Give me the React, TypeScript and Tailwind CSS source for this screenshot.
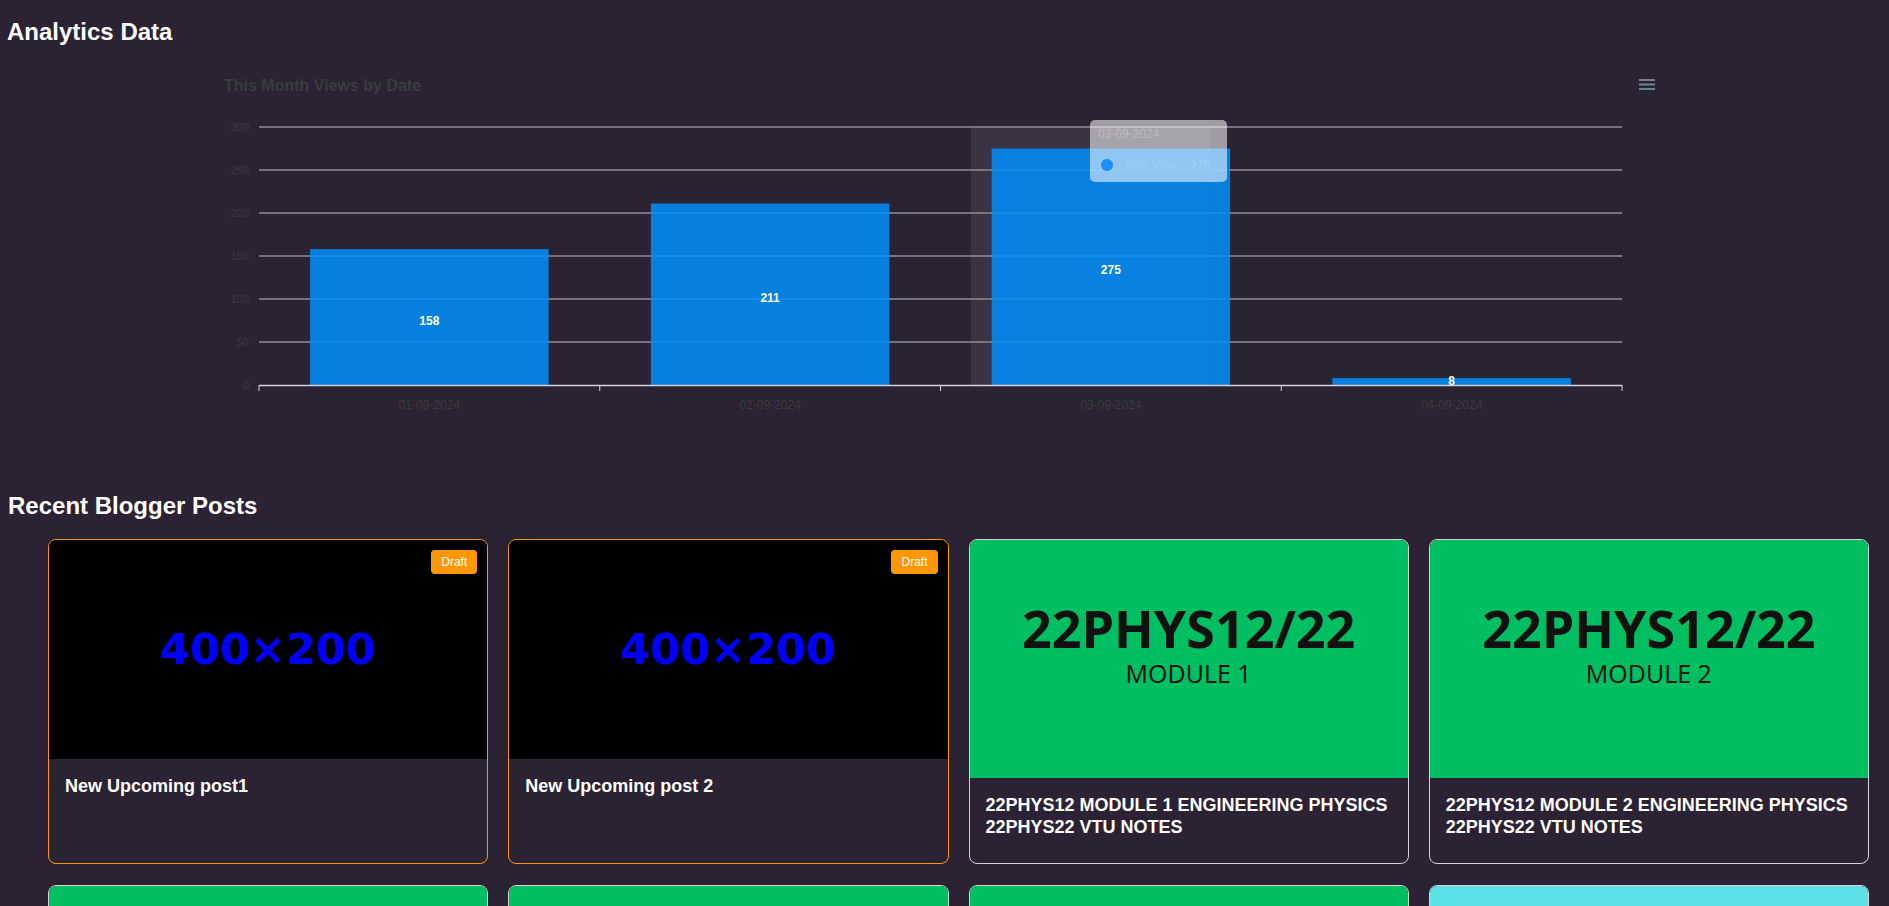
import React from 'react';

type Post = {
  title: string;
  draft?: boolean;
  kind: 'placeholder' | 'green' | 'cyan';
  module?: string;
};

const posts: Post[] = [
  { title: 'New Upcoming post1', draft: true, kind: 'placeholder' },
  { title: 'New Upcoming post 2', draft: true, kind: 'placeholder' },
  { title: '22PHYS12 MODULE 1 ENGINEERING PHYSICS 22PHYS22 VTU NOTES', kind: 'green', module: 'MODULE 1' },
  { title: '22PHYS12 MODULE 2 ENGINEERING PHYSICS 22PHYS22 VTU NOTES', kind: 'green', module: 'MODULE 2' },
  { title: '22PHYS12 MODULE 3 ENGINEERING PHYSICS 22PHYS22 VTU NOTES', kind: 'green', module: 'MODULE 3' },
  { title: '22PHYS12 MODULE 4 ENGINEERING PHYSICS 22PHYS22 VTU NOTES', kind: 'green', module: 'MODULE 4' },
  { title: '22PHYS12 MODULE 5 ENGINEERING PHYSICS 22PHYS22 VTU NOTES', kind: 'green', module: 'MODULE 5' },
  { title: 'VTU NOTES AND QUESTION PAPERS', kind: 'cyan' },
];

const views = [
  { date: '01-09-2024', value: 158 },
  { date: '02-09-2024', value: 211 },
  { date: '03-09-2024', value: 275 },
  { date: '04-09-2024', value: 8 },
];

// plot geometry (svg coords, origin at page x=200 y=48)
const PX = 59;
const PW = 1363;
const BASE = 337;
const K = 0.86;
const CAT = PW / 4;
const BAR = 238.5;

function ViewsChart() {
  const ticks = [0, 50, 100, 150, 200, 250, 300];
  return (
    <div className="relative ml-[200px] h-[442px] w-[1470px]">
      <svg width="1470" height="400" className="block font-['Liberation_Sans',Arial,sans-serif]">
        <text x="24" y="43" fontSize="16" fontWeight="700" fill="#373d3f">
          This Month Views by Date
        </text>

        {/* menu */}
        <g stroke="#6e8192" strokeWidth="2">
          <line x1="1439" y1="32" x2="1455" y2="32" />
          <line x1="1439" y1="36.5" x2="1455" y2="36.5" />
          <line x1="1439" y1="41" x2="1455" y2="41" />
        </g>

        {/* hover column */}
        <rect x="771" y="79" width="239" height={BASE - 79} fill="#ffffff" fillOpacity="0.08" />

        {ticks.map((t) => {
          const y = BASE - t * K;
          return (
            <g key={t}>
              {t > 0 && <line x1={PX} y1={y} x2={PX + PW} y2={y} stroke="#918d96" strokeWidth="1.5" />}
              <text x="49" y={y + 4} fontSize="11" fill="#373d3f" textAnchor="end">
                {t}
              </text>
            </g>
          );
        })}

        {views.map((v, i) => {
          const h = v.value * K;
          const x = PX + i * CAT + (CAT - BAR) / 2;
          return <rect key={v.date} x={x} y={BASE - h} width={BAR} height={h} fill="#008ffb" fillOpacity="0.85" />;
        })}

        {views.map((v, i) => {
          const h = v.value * K;
          const cx = PX + i * CAT + CAT / 2;
          const y = Math.min(BASE - h / 2 + 7.5, BASE);
          return (
            <text key={v.date} x={cx} y={y} fontSize="12" fontWeight="700" fill="#ffffff" textAnchor="middle">
              {v.value}
            </text>
          );
        })}

        <line x1={PX} y1={BASE + 0.5} x2={PX + PW} y2={BASE + 0.5} stroke="#d5d3d8" strokeWidth="1.5" />
        {[0, 1, 2, 3, 4].map((i) => (
          <line key={i} x1={PX + i * CAT} y1={BASE} x2={PX + i * CAT} y2={BASE + 6} stroke="#d5d3d8" strokeWidth="1" />
        ))}
        {views.map((v, i) => (
          <text key={v.date} x={PX + i * CAT + CAT / 2} y="361" fontSize="12" fill="#373d3f" textAnchor="middle">
            {v.date}
          </text>
        ))}
      </svg>

      {/* tooltip */}
      <div className="absolute left-[890px] top-[72px] h-[62px] w-[137px] rounded-[5px] bg-white/55 text-[12px]">
        <div className="h-[28px] px-2 pt-[6px] leading-4 text-white/25">03-09-2024</div>
        <div className="flex h-[34px] items-center gap-[10px] px-[11px] text-white/15">
          <span className="h-3 w-3 rounded-full bg-[#1b8ff5]" />
          <span>
            Total Views: <b>275</b>
          </span>
        </div>
      </div>
    </div>
  );
}

function PostImage({ post }: { post: Post }) {
  if (post.kind === 'placeholder') {
    return (
      <div className="flex h-[219px] items-center justify-center bg-black">
        <span className="font-['DejaVu_Sans',Verdana,sans-serif] text-[43px] font-bold text-[#0000ff]">400×200</span>
      </div>
    );
  }
  if (post.kind === 'cyan') {
    return <div className="h-[238px] bg-[#5ce1e6]" />;
  }
  return (
    <div className="flex h-[238px] flex-col items-center bg-[#00bf63] pt-[60px] font-['Open_Sans',sans-serif] text-[#111]">
      <span className="text-[52px] font-bold leading-[56px]">22PHYS12/22</span>
      <span className="mt-[2px] text-[25px] leading-[30px]">{post.module}</span>
    </div>
  );
}

function PostCard({ post }: { post: Post }) {
  return (
    <div
      className={`relative h-[325px] overflow-hidden rounded-lg border ${
        post.draft ? 'border-[#ff9800]' : 'border-[#d4d4d4]'
      }`}
    >
      <PostImage post={post} />
      {post.draft && (
        <span className="absolute right-[10px] top-[10px] rounded bg-[#ff9800] px-2.5 py-1 text-xs leading-4 text-white">
          Draft
        </span>
      )}
      <h3 className="p-4 text-lg font-bold leading-[22px] text-white">{post.title}</h3>
    </div>
  );
}

export default function App() {
  return (
    <div className="min-h-screen bg-[#2b2234] font-['Liberation_Sans',Arial,sans-serif]">
      <h2 className="px-[7px] pt-4 text-2xl font-bold leading-8 text-white">Analytics Data</h2>
      <ViewsChart />
      <h2 className="px-[8px] text-2xl font-bold leading-8 text-white">Recent Blogger Posts</h2>
      <div className="mt-[17px] grid grid-cols-4 gap-x-5 gap-y-[21px] pb-6 pl-[48px] pr-[20px]">
        {posts.map((p) => (
          <PostCard key={p.title} post={p} />
        ))}
      </div>
    </div>
  );
}
